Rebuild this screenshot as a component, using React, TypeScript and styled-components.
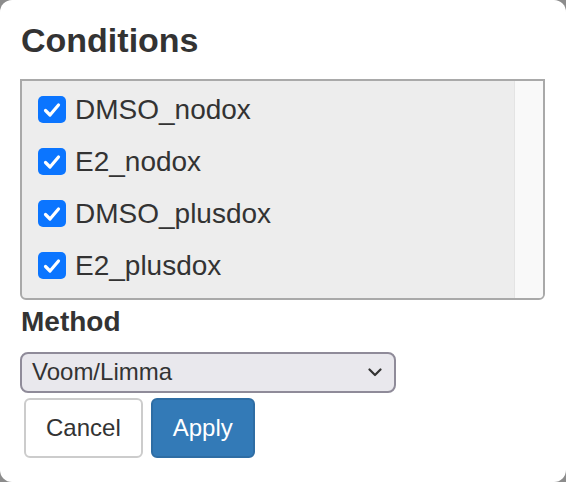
import React, { useState } from "react";
import styled, { createGlobalStyle } from "styled-components";

const GlobalStyle = createGlobalStyle`
  html, body {
    margin: 0;
    padding: 0;
    background: #8c8c8c;
  }
  body {
    font-family: "Liberation Sans", Arial, Helvetica, sans-serif;
    color: #333;
  }
`;

const Panel = styled.div`
  width: 566px;
  height: 482px;
  box-sizing: border-box;
  background: #fff;
  border-radius: 12px;
  padding: 22px 20px 0 20px;
  display: flex;
  flex-direction: column;
`;

const Title = styled.h3`
  margin: 0 0 20px 1px;
  font-size: 34px;
  line-height: 1.1;
  font-weight: 700;
  color: #333;
`;

const ListBox = styled.div`
  width: 525px;
  height: 221px;
  box-sizing: border-box;
  border: 2px solid #a9a9a9;
  border-radius: 0 0 6px 6px;
  background: #ededed;
  display: flex;
  overflow: hidden;
`;

const ListItems = styled.div`
  flex: 1;
  display: flex;
  flex-direction: column;
  gap: 25px;
  padding: 15px 0 0 16px;
`;

const Track = styled.div`
  width: 28px;
  background: #f9f9f9;
  border-left: 1px solid #e4e4e4;
`;

const Row = styled.label`
  display: flex;
  align-items: center;
  gap: 9px;
  height: 27px;
  font-size: 28px;
  color: #333;
  cursor: pointer;
`;

const Box = styled.span<{ $checked: boolean }>`
  width: 28px;
  height: 27px;
  box-sizing: border-box;
  border-radius: 5px;
  background: ${(p) => (p.$checked ? "#0b75ff" : "#fff")};
  border: ${(p) => (p.$checked ? "none" : "2px solid #888")};
  display: flex;
  align-items: center;
  justify-content: center;
  flex-shrink: 0;
`;

const Label = styled.div`
  margin: 5px 0 13px 1px;
  font-size: 28px;
  line-height: 1.2;
  font-weight: 700;
  color: #333;
`;

const SelectWrap = styled.div`
  width: 376px;
  height: 41px;
  box-sizing: border-box;
  border: 2px solid #8f8b99;
  border-radius: 8px;
  background: #e9e8ed;
  display: flex;
  align-items: center;
  justify-content: space-between;
  padding: 0 12px 0 10px;
  font-size: 24px;
  color: #333;
`;

const Buttons = styled.div`
  display: flex;
  gap: 8px;
  margin: 5px 0 0 4px;
`;

const Button = styled.button<{ $primary?: boolean }>`
  height: 60px;
  box-sizing: border-box;
  padding: 0 20px;
  font-family: inherit;
  font-size: 24px;
  border-radius: 6px;
  border: 2px solid ${(p) => (p.$primary ? "#2e6da4" : "#ccc")};
  background: ${(p) => (p.$primary ? "#337ab7" : "#fff")};
  color: ${(p) => (p.$primary ? "#fff" : "#333")};
  cursor: pointer;
`;

const conditions = ["DMSO_nodox", "E2_nodox", "DMSO_plusdox", "E2_plusdox"];

export default function App() {
  const [checked, setChecked] = useState<Record<string, boolean>>(
    Object.fromEntries(conditions.map((c) => [c, true]))
  );

  return (
    <>
      <GlobalStyle />
      <Panel>
        <Title>Conditions</Title>
        <ListBox>
          <ListItems>
            {conditions.map((c) => (
              <Row key={c} onClick={() => setChecked({ ...checked, [c]: !checked[c] })}>
                <Box $checked={checked[c]}>
                  {checked[c] && (
                    <svg width="18" height="16" viewBox="0 0 18 16">
                      <path d="M2.5 8.5 L7 13 L15.5 3" fill="none" stroke="#fff" strokeWidth="3.2" strokeLinecap="round" strokeLinejoin="round" />
                    </svg>
                  )}
                </Box>
                {c}
              </Row>
            ))}
          </ListItems>
          <Track />
        </ListBox>
        <Label>Method</Label>
        <SelectWrap>
          <span>Voom/Limma</span>
          <svg width="14" height="9" viewBox="0 0 14 9">
            <path d="M1.5 1.5 L7 7 L12.5 1.5" fill="none" stroke="#333" strokeWidth="2.2" strokeLinecap="round" strokeLinejoin="round" />
          </svg>
        </SelectWrap>
        <Buttons>
          <Button>Cancel</Button>
          <Button $primary>Apply</Button>
        </Buttons>
      </Panel>
    </>
  );
}
